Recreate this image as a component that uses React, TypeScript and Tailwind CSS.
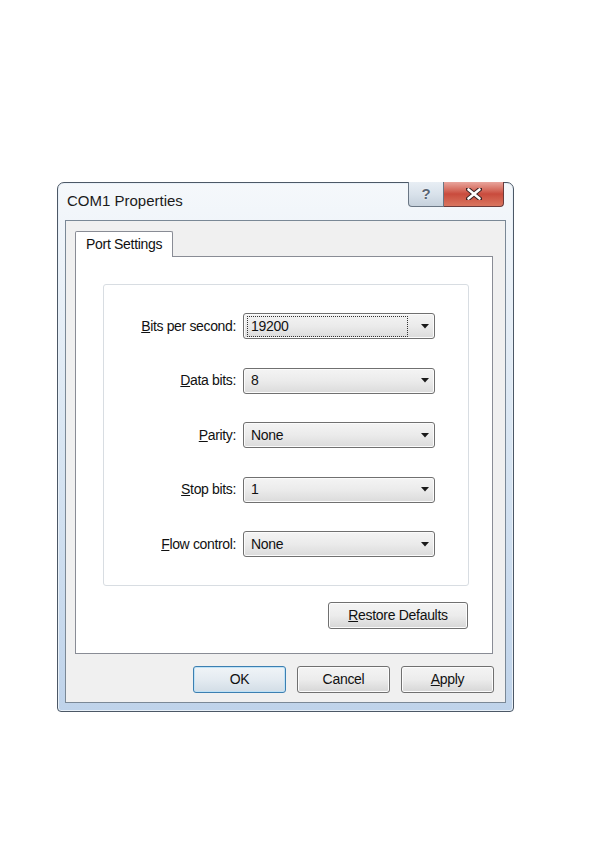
import React from 'react';

const font = { fontFamily: '"Liberation Sans", Arial, sans-serif' };

const Arrow = () => (
  <svg width="8" height="5" viewBox="0 0 8 5" className="shrink-0">
    <path d="M0 0 H8 L4 4.5 Z" fill="#1a1a1a" />
  </svg>
);

interface ComboProps {
  value: string;
  focused?: boolean;
}

const Combo: React.FC<ComboProps> = ({ value, focused = false }) => (
  <div className="w-[192px] h-[26px] rounded-[3px] border border-[#707070] bg-gradient-to-b from-[#f4f4f4] via-[#ebebeb] to-[#dbdbdb] flex items-center pl-[3px] pr-[5px] shadow-[inset_0_0_0_1px_#fbfbfb]">
    <div
      className={`h-[21px] w-[161px] flex items-center pl-[3px] text-[14px] tracking-[-0.3px] text-[#111] ${
        focused ? 'border border-dotted border-[#333]' : 'border border-transparent'
      }`}
    >
      {value}
    </div>
    <div className="flex-1" />
    <Arrow />
  </div>
);

const Row: React.FC<{ label: React.ReactNode; value: string; focused?: boolean }> = ({ label, value, focused }) => (
  <div className="flex items-center">
    <div className="w-[133px] text-right text-[14px] tracking-[-0.35px] text-[#111] pr-[1px]">{label}</div>
    <div className="w-[6px]" />
    <Combo value={value} focused={focused} />
  </div>
);

const Btn: React.FC<{ children: React.ReactNode; w: string; primary?: boolean }> = ({ children, w, primary }) => (
  <div
    className={`${w} h-[27px] rounded-[3px] border flex items-center justify-center text-[14px] tracking-[-0.3px] text-[#111] ${
      primary
        ? 'border-[#3c7fb1] bg-gradient-to-b from-[#f0f4f7] via-[#e4ebf1] to-[#d2dde6] shadow-[inset_0_0_0_1px_#bfe2f6]'
        : 'border-[#707070] bg-gradient-to-b from-[#f4f4f4] via-[#ececec] to-[#d6d6d6] shadow-[inset_0_0_0_1px_#fcfcfc]'
    }`}
  >
    {children}
  </div>
);

export default function App() {
  return (
    <div className="w-[595px] h-[842px] bg-white overflow-hidden" style={font}>
      <div className="ml-[57px] mt-[182px] w-[457px] h-[530px] rounded-t-[7px] rounded-b-[4px] border border-[#4c5866] bg-gradient-to-b from-[#f5f8fb] via-[#d8e5f2] to-[#bfd3ea] px-[7px] pb-[8px] flex flex-col shadow-[inset_0_0_0_1px_#e8f0f8]">
        {/* title bar */}
        <div className="h-[37px] flex items-start">
          <div className="pl-[2px] pt-[9px] text-[15px] text-[#1b1b1b] leading-[18px]">COM1 Properties</div>
          <div className="flex-1" />
          <div className="flex -mt-px mr-[2px]">
            <div className="w-[36px] h-[25px] rounded-bl-[4px] border border-t-0 border-[#6a7684] bg-gradient-to-b from-[#e8eef4] via-[#d9e2eb] to-[#c6d1dc] flex items-center justify-center">
              <span className="text-[15px] font-bold text-[#5a6573] [text-shadow:0_0_2px_#fff]">?</span>
            </div>
            <div className="w-[60px] h-[25px] rounded-br-[4px] border border-t-0 border-l-0 border-[#6b3a3a] bg-gradient-to-b from-[#e8a59d] via-[#c94b3d] to-[#d9755f] flex items-center justify-center">
              <svg width="16" height="12" viewBox="0 0 16 12">
                <path d="M2 1 L14 11 M14 1 L2 11" stroke="#3b2323" strokeWidth="4.5" strokeLinecap="round" />
                <path d="M2.5 1.5 L13.5 10.5 M13.5 1.5 L2.5 10.5" stroke="#ffffff" strokeWidth="2.6" strokeLinecap="round" />
              </svg>
            </div>
          </div>
        </div>

        {/* client area */}
        <div className="flex-1 border border-[#7a8896] bg-[#f0f0f0] pt-[10px] pl-[9px] pr-[11px] flex flex-col">
          <div className="relative z-10 -mb-px w-[98px] h-[26px] border border-b-0 border-[#898c95] bg-white rounded-t-[2px] pl-[10px] pt-[2px] text-[14px] tracking-[-0.3px] text-[#111]">
            Port Settings
          </div>
          <div className="w-[418px] h-[398px] border border-[#898c95] bg-white pt-[27px] pl-[27px] flex flex-col">
            <div className="w-[366px] h-[302px] border border-[#d8dde2] rounded-[3px] pt-[28px] flex flex-col gap-[28.5px]">
              <Row label={<><u>B</u>its per second:</>} value="19200" focused />
              <Row label={<><u>D</u>ata bits:</>} value="8" />
              <Row label={<><u>P</u>arity:</>} value="None" />
              <Row label={<><u>S</u>top bits:</>} value="1" />
              <Row label={<><u>F</u>low control:</>} value="None" />
            </div>
            <div className="mt-[16px] self-end mr-[24px]">
              <Btn w="w-[140px]">
                <span><u>R</u>estore Defaults</span>
              </Btn>
            </div>
          </div>
          <div className="mt-[12px] flex justify-end gap-[11px]">
            <Btn w="w-[93px]" primary>
              OK
            </Btn>
            <Btn w="w-[93px]">Cancel</Btn>
            <Btn w="w-[93px]">
              <span><u>A</u>pply</span>
            </Btn>
          </div>
        </div>
      </div>
    </div>
  );
}
